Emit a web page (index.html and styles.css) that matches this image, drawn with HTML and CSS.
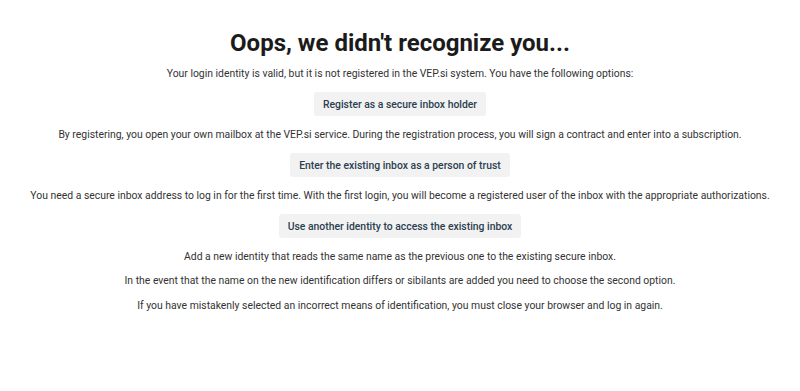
FILE: index.html
```html
<!DOCTYPE html>
<html lang="en">
<head>
<meta charset="utf-8">
<title>Not recognized</title>
<link rel="stylesheet" href="styles.css">
</head>
<body>
<main class="page">
  <h1 class="title">Oops, we didn't recognize you...</h1>
  <p class="text">Your login identity is valid, but it is not registered in the VEP.si system. You have the following options:</p>
  <button class="btn" type="button">Register as a secure inbox holder</button>
  <p class="text">By registering, you open your own mailbox at the VEP.si service. During the registration process, you will sign a contract and enter into a subscription.</p>
  <button class="btn" type="button">Enter the existing inbox as a person of trust</button>
  <p class="text">You need a secure inbox address to log in for the first time. With the first login, you will become a registered user of the inbox with the appropriate authorizations.</p>
  <button class="btn" type="button">Use another identity to access the existing inbox</button>
  <div class="notes">
    <p class="text">Add a new identity that reads the same name as the previous one to the existing secure inbox.</p>
    <p class="text">In the event that the name on the new identification differs or sibilants are added you need to choose the second option.</p>
    <p class="text">If you have mistakenly selected an incorrect means of identification, you must close your browser and log in again.</p>
  </div>
</main>
</body>
</html>
```
FILE: styles.css
```css
html, body {
  margin: 0;
  padding: 0;
  background: #ffffff;
}
body {
  font-family: Roboto, "Liberation Sans", sans-serif;
  color: #333333;
}
.page {
  display: flex;
  flex-direction: column;
  align-items: center;
  gap: 11.5px;
  padding-top: 31px;
  text-align: center;
}
.title {
  margin: 0;
  font-size: 24px;
  line-height: 24px;
  font-weight: 700;
  color: #1b1b1b;
}
.text {
  margin: 0;
  font-size: 10.4px;
  line-height: 14px;
}
.notes {
  display: flex;
  flex-direction: column;
  align-items: center;
  gap: 10.5px;
}
.btn {
  margin: 0;
  height: 24px;
  padding: 0 9px;
  border: none;
  border-radius: 3px;
  background: #f2f2f2;
  color: #2c3e50;
  font-family: Roboto, "Liberation Sans", sans-serif;
  font-size: 10.4px;
  font-weight: 500;
}
```
